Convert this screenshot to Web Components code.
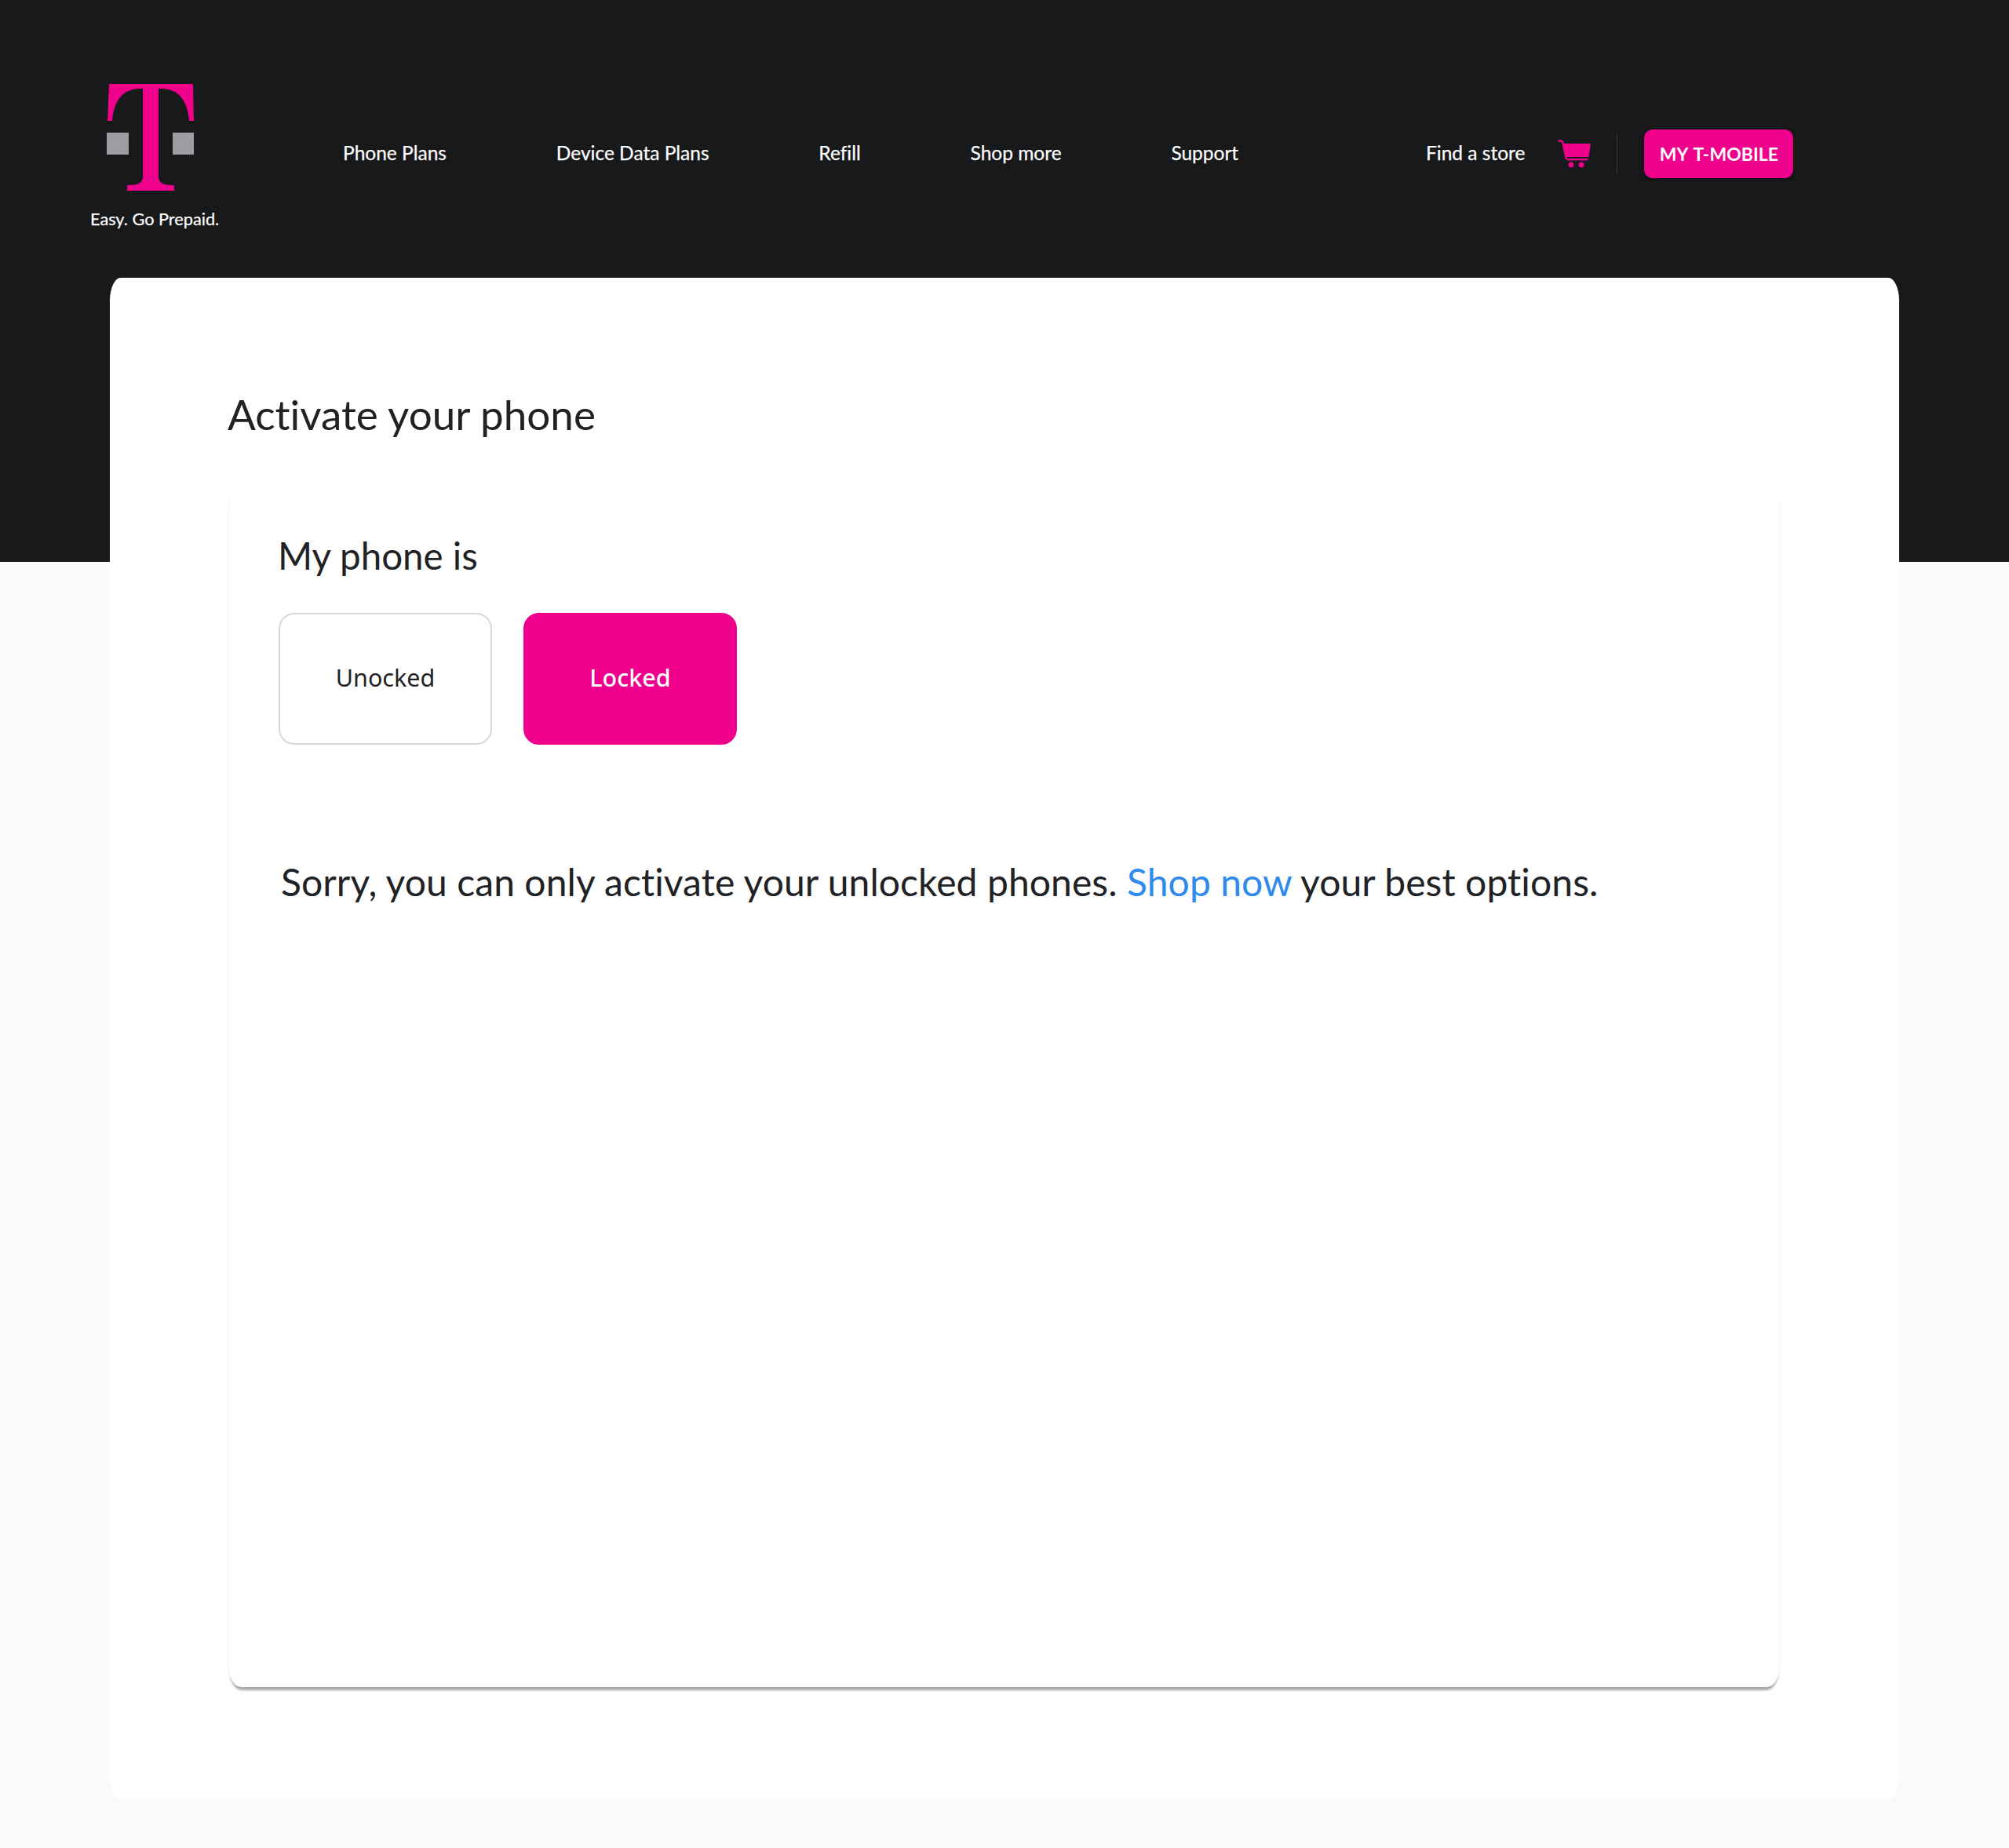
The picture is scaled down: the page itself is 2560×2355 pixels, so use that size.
<!DOCTYPE html>
<html>
<head>
<meta charset="utf-8">
<title>Activate your phone</title>
<style>
  html, body { margin: 0; background: #f9fafc; }
  body { font-family: Lato, "Liberation Sans", sans-serif; color: #212225; font-variant-ligatures: none; }
  a { color: #2f8aee; }
</style>
</head>
<body>
<tm-page>
  <tm-header></tm-header>
  <tm-card>
    <tm-title>Activate your phone</tm-title>
    <tm-panel>
      <tm-label>My phone is</tm-label>
      <tm-choices>
        <tm-choice>Unocked</tm-choice>
        <tm-choice selected>Locked</tm-choice>
      </tm-choices>
      <tm-message>Sorry, you can only activate your unlocked phones. <a>Shop now</a> your best options.</tm-message>
    </tm-panel>
  </tm-card>
</tm-page>
<script>
  const define = (name, css, html) => {
    customElements.define(name, class extends HTMLElement {
      constructor() {
        super();
        this.attachShadow({ mode: "open" });
        this.shadowRoot.innerHTML = `<style>${css}</style>${html}`;
      }
    });
  };

  define("tm-page", `
    :host {
      display: block;
      height: 2355px;
      overflow: hidden;
      background: linear-gradient(#18191b 716px, #f9fafc 716px);
    }
  `, `<slot></slot>`);

  define("tm-nav-link", `
    :host {
      display: block;
      font-size: 24.500px;
      color: #fff;
      white-space: nowrap;
      padding-bottom: 3px;
      -webkit-text-stroke: .25px #fff;
    }
  `, `<slot></slot>`);

  define("tm-header", `
    :host {
      display: flex;
      align-items: flex-start;
      height: 354px;
      box-sizing: border-box;
      padding: 107px 0 0 115px;
      color: #fff;
    }
    .brand { display: flex; flex-direction: column; width: 321px; flex: none; }
    .brand svg { display: block; margin-left: 21px; }
    .tagline { font-size: 21.700px; margin-top: 23px; line-height: 26px; white-space: nowrap; -webkit-text-stroke: .25px #fff; }
    nav { display: flex; gap: 139.800px; align-items: center; height: 62px; margin: 58px 0 0 1px; width: 1380px; flex: none; }
    .tools { display: flex; align-items: center; height: 62px; margin-top: 58px; }
    .cart { display: block; margin-left: 42px; }
    .divider { width: 1px; height: 50px; background: #33343a; margin: 0 34px 0 33px; }
    .my {
      display: flex; align-items: center; justify-content: center;
      width: 190px; height: 62px; border-radius: 11px;
      background: #ef008c; box-shadow: 0 2px 6px rgba(0,0,0,.35);
      font-size: 23px; font-weight: 700; word-spacing: 2px;
    }
  `, `
    <div class="brand">
      <svg width="111" height="136" viewBox="0 0 111 136">
        <path fill="#ef008c" d="M3 0H110L111 47H105C103 22 92 6 70 6H66V118C66 126 72 129 86 129V136H26V129C40 129 46 126 46 118V6H42C20 6 9 22 7 47H1Z"/>
        <rect x="0" y="62" width="28" height="28" fill="#9d9ea2"/>
        <rect x="84" y="62" width="27" height="28" fill="#9d9ea2"/>
      </svg>
      <div class="tagline">Easy. Go Prepaid.</div>
    </div>
    <nav>
      <tm-nav-link>Phone Plans</tm-nav-link>
      <tm-nav-link>Device Data Plans</tm-nav-link>
      <tm-nav-link>Refill</tm-nav-link>
      <tm-nav-link>Shop more</tm-nav-link>
      <tm-nav-link>Support</tm-nav-link>
    </nav>
    <div class="tools">
      <tm-nav-link>Find a store</tm-nav-link>
      <svg class="cart" width="42" height="38" viewBox="0 0 42 38">
        <path fill="none" stroke="#ef008c" stroke-width="2.500" d="M0.500 2.500H3.500Q6 2.500 6.500 5L11 26"/>
        <path fill="#ef008c" d="M7 6H42L39.500 23H10.500Z"/>
        <path fill="#ef008c" d="M11.500 25H38.500V27.500H12Z"/>
        <circle cx="17" cy="33" r="3.500" fill="#ef008c"/>
        <circle cx="30" cy="33" r="3.500" fill="#ef008c"/>
      </svg>
      <div class="divider"></div>
      <div class="my">MY T-MOBILE</div>
    </div>
  `);

  define("tm-card", `
    :host {
      display: block;
      width: 2280px;
      height: 1939px;
      margin-left: 140px;
      box-sizing: border-box;
      padding: 140px 153px 0 152px;
      background: #fff;
      border-radius: 14px / 30px;
      box-shadow: 0 0 1px rgba(255,255,255,.5);
    }
  `, `<slot></slot>`);

  define("tm-title", `
    :host { display: block; font-size: 53px; line-height: 68px; height: 126px; margin-left: -2px; }
  `, `<slot></slot>`);

  define("tm-panel", `
    :host {
      display: block;
      height: 1530px;
      box-sizing: border-box;
      padding: 60px 58px 0 63px;
      background: #fff;
      border-radius: 16px / 24px;
      box-shadow: 0 6px 3px -2px rgba(0,0,0,.28), 0 3px 3px rgba(0,0,0,.1);
    }
  `, `<slot></slot>`);

  define("tm-label", `
    :host { display: block; font-size: 47.500px; line-height: 56px; margin-left: -1px; }
  `, `<slot></slot>`);

  define("tm-choices", `
    :host { display: flex; gap: 40px; margin-top: 45px; }
  `, `<slot></slot>`);

  define("tm-choice", `
    :host {
      display: flex; align-items: center; justify-content: center;
      width: 272px; height: 168px;
      box-sizing: border-box;
      border: 2px solid #d8d8d8;
      border-radius: 20px;
      padding-bottom: 4px;
      font-family: "Noto Sans", sans-serif;
      font-size: 30.500px;
    }
    :host([selected]) { background: #ef008c; border-color: #ef008c; color: #fff; font-weight: 500; }
  `, `<slot></slot>`);

  define("tm-message", `
    :host { display: block; margin: 143px 0 0 3px; font-size: 48px; line-height: 64px; letter-spacing: .08px; white-space: nowrap; }
  `, `<slot></slot>`);
</script>
</body>
</html>
